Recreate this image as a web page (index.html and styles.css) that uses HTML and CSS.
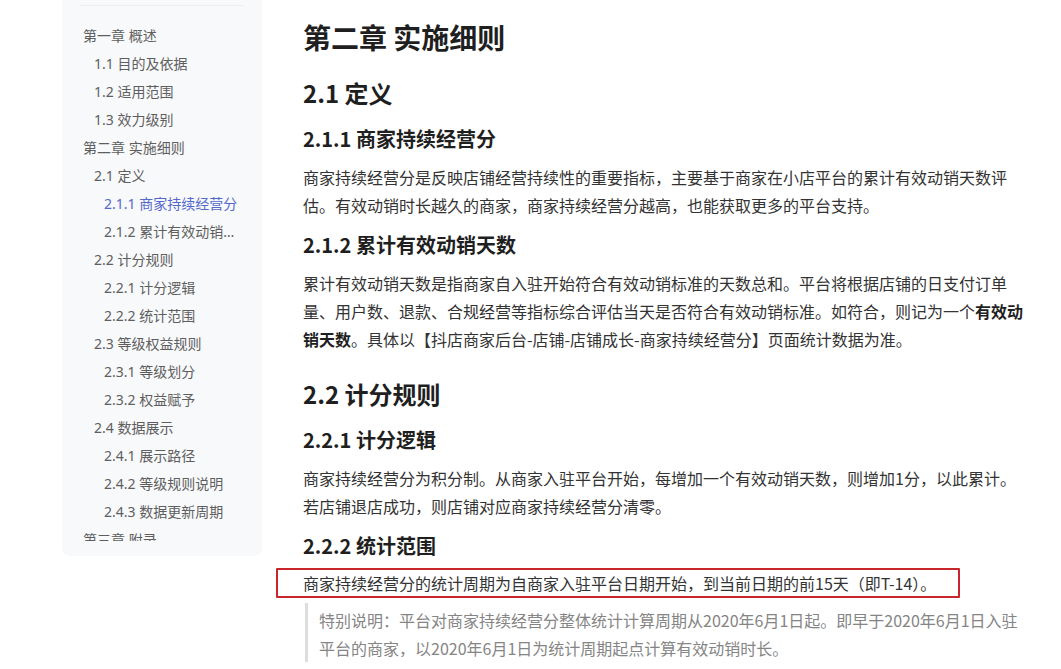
FILE: index.html
```html
<!DOCTYPE html>
<html lang="zh-CN">
<head>
<meta charset="utf-8">
<title>第二章 实施细则</title>
<link rel="stylesheet" href="styles.css">
</head>
<body>
<div class="page">
  <aside class="toc">
    <div class="toc-divider"></div>
    <ul class="toc-list">
      <li class="l1">第一章 概述</li>
      <li class="l2">1.1 目的及依据</li>
      <li class="l2">1.2 适用范围</li>
      <li class="l2">1.3 效力级别</li>
      <li class="l1">第二章 实施细则</li>
      <li class="l2">2.1 定义</li>
      <li class="l3 active">2.1.1 商家持续经营分</li>
      <li class="l3">2.1.2 累计有效动销天数</li>
      <li class="l2">2.2 计分规则</li>
      <li class="l3">2.2.1 计分逻辑</li>
      <li class="l3">2.2.2 统计范围</li>
      <li class="l2">2.3 等级权益规则</li>
      <li class="l3">2.3.1 等级划分</li>
      <li class="l3">2.3.2 权益赋予</li>
      <li class="l2">2.4 数据展示</li>
      <li class="l3">2.4.1 展示路径</li>
      <li class="l3">2.4.2 等级规则说明</li>
      <li class="l3">2.4.3 数据更新周期</li>
      <li class="l1">第三章 附录</li>
    </ul>
  </aside>
  <main class="doc">
    <h1>第二章 实施细则</h1>
    <h2>2.1 定义</h2>
    <h3>2.1.1 商家持续经营分</h3>
    <p>商家持续经营分是反映店铺经营持续性的重要指标，主要基于商家在小店平台的累计有效动销天数评估。有效动销时长越久的商家，商家持续经营分越高，也能获取更多的平台支持。</p>
    <h3>2.1.2 累计有效动销天数</h3>
    <p class="dotted-line">累计有效动销天数是指商家自入驻开始符合有效动销标准的天数总和。平台将根据店铺的日支付订单量、用户数、退款、合规经营等指标综合评估当天是否符合有效动销标准。如符合，则记为一个<strong>有效动销天数</strong>。具体以【抖店商家后台-店铺-店铺成长-商家持续经营分】页面统计数据为准。</p>
    <h2>2.2 计分规则</h2>
    <h3>2.2.1 计分逻辑</h3>
    <p>商家持续经营分为积分制。从商家入驻平台开始，每增加一个有效动销天数，则增加1分，以此累计。若店铺退店成功，则店铺对应商家持续经营分清零。</p>
    <h3>2.2.2 统计范围</h3>
    <p class="marked">商家持续经营分的统计周期为自商家入驻平台日期开始，到当前日期的前15天（即T-14）。<span class="mark-box"></span></p>
    <blockquote>特别说明：平台对商家持续经营分整体统计计算周期从2020年6月1日起。即早于2020年6月1日入驻平台的商家，以2020年6月1日为统计周期起点计算有效动销时长。</blockquote>
  </main>
</div>
</body>
</html>
```

FILE: styles.css
```css
* { box-sizing: border-box; }

html, body {
  margin: 0;
  padding: 0;
  background: #ffffff;
  font-family: "Noto Sans CJK SC", "Noto Sans", sans-serif;
}

.page {
  display: flex;
  align-items: flex-start;
  padding-left: 62px;
  height: 669px;
  overflow: hidden;
}

/* ---------- sidebar ---------- */
.toc {
  flex: 0 0 200px;
  width: 200px;
  background: #f8f9fb;
  border-radius: 0 0 8px 8px;
  padding: 5px 20px 15px 21px;
}

.toc-divider {
  height: 1px;
  background: #eceef2;
  margin: 0 0 0 -3px;
  width: 163px;
}

.toc-list {
  list-style: none;
  margin: 16px 0 0 0;
  padding: 0;
  height: 519px;
  overflow: hidden;
}

.toc-list li {
  font-family: "Noto Sans", "Noto Sans CJK SC", sans-serif;
  font-size: 14px;
  line-height: 28px;
  height: 28px;
  color: #5e5e5e;
  white-space: nowrap;
  overflow: hidden;
  text-overflow: ellipsis;
}

.toc-list .l1 { padding-left: 0; }
.toc-list .l2 { padding-left: 11px; }
.toc-list .l3 { padding-left: 21px; }
.toc-list .active { color: #5468cc; }

/* ---------- document ---------- */
.doc {
  margin-left: 41px;
  width: 728px;
  padding-top: 17px;
  color: #333333;
}

.doc h1 {
  margin: 0;
  font-size: 28px;
  line-height: 40px;
  font-weight: 700;
  color: #1f1f1f;
}

.doc h2 {
  margin: 25px 0 0 0;
  font-size: 24px;
  line-height: 32px;
  font-weight: 700;
  color: #1f1f1f;
}

.doc h1 + h2 { margin-top: 20px; }

.doc h3 {
  margin: 12px 0 0 0;
  font-size: 20px;
  line-height: 28px;
  font-weight: 700;
  color: #1f1f1f;
}

.doc h2 + h3 { margin-top: 16px; }

.doc p {
  margin: 10px 0 0 0;
  font-size: 16px;
  line-height: 28px;
}

.doc strong {
  font-weight: 700;
  color: #1f1f1f;
}

.doc p.marked {
  margin-top: 9px;
  position: relative;
}

.mark-box {
  position: absolute;
  left: -27px;
  top: -1px;
  width: 684px;
  height: 30px;
  border: 2px solid #c9262c;
  border-radius: 1px;
  pointer-events: none;
}

.doc blockquote {
  margin: 6px 0 0 2px;
  padding: 3px 0 0 11px;
  border-left: 3px solid #dddddd;
  font-size: 16px;
  line-height: 28px;
  color: #858585;
}
```
